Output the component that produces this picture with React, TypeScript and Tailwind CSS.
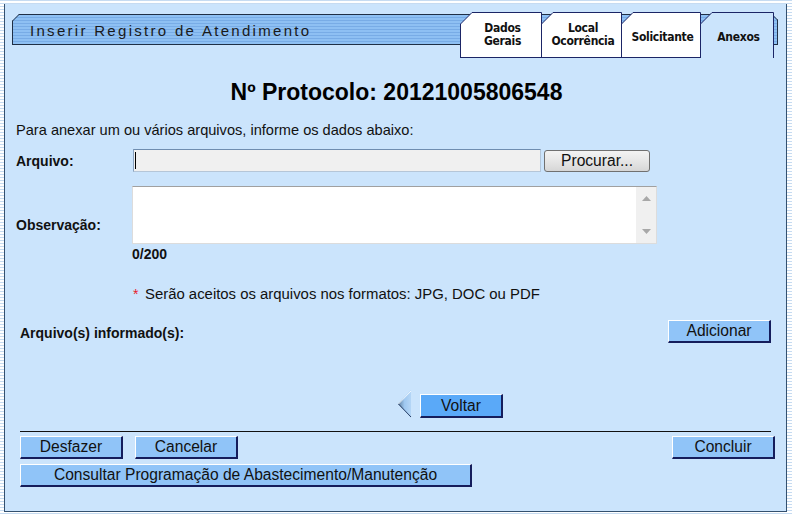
import React from "react";

const btn =
  "h-[23px] bg-[#90c4f8] border-t border-l border-r-2 border-b-2 border-t-white border-l-white border-r-[#151d5c] border-b-[#151d5c] text-[15.6px] leading-none text-[#111] flex items-center justify-center";

type TabProps = { w: number; lines: string[]; active?: boolean };

function Tab({ w, lines, active }: TabProps) {
  const h = 46;
  return (
    <div className="relative shrink-0 -ml-px first:ml-0" style={{ width: w, height: h }}>
      <svg className="absolute inset-0" width={w} height={h}>
        <polygon
          points={`0.5,${h} 0.5,12 12,0.5 ${w - 0.5},0.5 ${w - 0.5},${h}`}
          fill={active ? "#cbe4fc" : "#ffffff"}
          stroke="#1b2566"
          strokeWidth="1"
        />
        {active ? <rect x="1" y={h - 1} width={w - 2} height="1" fill="#cbe4fc" /> : <line x1="0" y1={h - 0.5} x2={w} y2={h - 0.5} stroke="#1b2566" />}
      </svg>
      <div className={"relative flex h-full flex-col items-center justify-center pl-[3px] text-[12px] leading-[13px] font-bold text-[#111] font-['DejaVu_Sans_Condensed','Liberation_Sans_Narrow','DejaVu_Sans',sans-serif] [font-stretch:condensed] tracking-[-0.3px] " + (lines.length === 1 ? "pt-[5px]" : "")}>
        {lines.map((l) => (
          <span key={l}>{l}</span>
        ))}
      </div>
    </div>
  );
}

export default function App() {
  return (
    <div className="w-[792px] h-[516px] overflow-hidden pt-[4px] pl-[4px] bg-[repeating-linear-gradient(180deg,#c6dbf1_0px,#c6dbf1_1px,#ffffff_1px,#ffffff_3px)] font-['Liberation_Sans',Arial,sans-serif] text-[#111]">
      <div className="w-[783px] h-[508px] bg-[#cbe4fc] border-l border-r border-b border-[#34506e] flex flex-col">
        {/* header */}
        <div className="relative h-[54px] shrink-0">
          <div className="relative mt-[10px] ml-[7px] w-[766px] h-[31px] border border-[#1f2f45] bg-[repeating-linear-gradient(180deg,#8ec0f3_0px,#8ec0f3_2px,#78ace6_2px,#78ace6_3px)] flex items-center pl-[17px] pt-[3px]">
            <svg className="absolute -left-px -top-px" width="8" height="8">
              <polygon points="0,0 7,0 0,7" fill="#cbe4fc" />
              <line x1="0.5" y1="7" x2="7" y2="0.5" stroke="#1f2f45" />
            </svg>
            <svg className="absolute -right-px -top-px" width="6" height="6">
              <polygon points="0,0 6,0 6,6" fill="#cbe4fc" />
              <line x1="0" y1="0.5" x2="5.5" y2="6" stroke="#1f2f45" />
            </svg>
            <span className="text-[15px] tracking-[2.3px] text-[#1a1a1a]">Inserir Registro de Atendimento</span>
          </div>
          <div className="absolute left-[455px] top-[8px] flex">
            <Tab w={82} lines={["Dados", "Gerais"]} />
            <Tab w={81} lines={["Local", "Ocorrência"]} />
            <Tab w={80} lines={["Solicitante"]} />
            <Tab w={74} lines={["Anexos"]} active />
          </div>
        </div>

        {/* protocolo */}
        <div className="mt-[21px] text-center text-[23px] leading-[26px] font-bold text-black pl-[2px]">
          Nº Protocolo: 20121005806548
        </div>

        <div className="mt-[17px] pl-[11px] text-[14.6px] leading-[16px]">
          Para anexar um ou vários arquivos, informe os dados abaixo:
        </div>

        {/* arquivo */}
        <div className="mt-[11px] pl-[11px] flex items-center">
          <div className="w-[117px] pt-[1px] text-[14px] leading-[16px] font-bold">Arquivo:</div>
          <div className="w-[408px] h-[23px] bg-[#f0f0f0] border border-[#b5c6d8] border-t-[#6f8db0] border-l-[#8aa3c0] flex items-center pl-[1px]">
            <div className="w-px h-[17px] bg-black" />
          </div>
          <div className="ml-[3px] w-[106px] h-[22px] rounded-[3px] border border-[#707070] bg-[linear-gradient(180deg,#f3f3f3,#e6e6e6_50%,#d6d6d6)] text-[15.6px] leading-none flex items-center justify-center">
            Procurar...
          </div>
        </div>

        {/* observacao */}
        <div className="mt-[14px] pl-[11px] flex items-center">
          <div className="w-[116px] mt-[20px] text-[14px] leading-[16px] font-bold">Observação:</div>
          <div className="w-[525px] h-[58px] bg-white border-t border-[#a0a0a0] border-x border-x-[#dcdcdc] border-b border-b-[#dcdcdc] flex">
            <div className="flex-1" />
            <div className="w-[20px] bg-[#f0f0f0] flex flex-col items-center justify-between py-[9px]">
              <svg width="9" height="5"><polygon points="0,5 4.5,0 9,5" fill="#a8a8a8" /></svg>
              <svg width="9" height="5"><polygon points="0,0 4.5,5 9,0" fill="#a8a8a8" /></svg>
            </div>
          </div>
        </div>
        <div className="mt-[2px] pl-[127px] text-[14px] leading-[16px] font-bold">0/200</div>

        <div className="mt-[24px] pl-[128px] flex items-center text-[14.9px] leading-[16px]">
          <span className="text-[#e8202a] w-[12px] text-[14px]">*</span>
          <span>Serão aceitos os arquivos nos formatos: JPG, DOC ou PDF</span>
        </div>

        {/* arquivos informados */}
        <div className="mt-[18px] pl-[15px] pr-[15px] flex items-center justify-between">
          <div className="pt-[3px] text-[14px] leading-[16px] font-bold">Arquivo(s) informado(s):</div>
          <div className={btn + " w-[103px]"}>Adicionar</div>
        </div>

        {/* voltar */}
        <div className="mt-[47px] ml-[393px] flex items-end">
          <svg width="14" height="28" className="shrink-0">
            <defs>
              <linearGradient id="arr" x1="0" x2="1" y1="0" y2="0">
                <stop offset="0" stopColor="#5f7f9f" />
                <stop offset="0.5" stopColor="#9fc8f0" />
                <stop offset="1" stopColor="#b5d6f6" />
              </linearGradient>
            </defs>
            <polygon points="0,14 13,0 13,28" fill="url(#arr)" />
            <line x1="0.5" y1="14" x2="13" y2="1" stroke="#ffffff" strokeWidth="0.8" />
            <line x1="0.5" y1="14" x2="13" y2="27" stroke="#2a3f66" strokeWidth="1" />
          </svg>
          <div className="ml-[8px] w-[83px] h-[24px] bg-[#5aa9f8] border-t border-l border-r-2 border-b-2 border-t-white border-l-white border-r-[#151d5c] border-b-[#151d5c] text-[15.6px] leading-none flex items-center justify-center">
            Voltar
          </div>
        </div>

        <div className="mt-[13px] ml-[15px] w-[751px] h-px bg-[#111]" />

        <div className="mt-[4px] pl-[15px] pr-[11px] flex items-center">
          <div className={btn + " w-[103px]"}>Desfazer</div>
          <div className={btn + " w-[103px] ml-[12px]"}>Cancelar</div>
          <div className="flex-1" />
          <div className={btn + " w-[103px]"}>Concluir</div>
        </div>
        <div className="mt-[5px] pl-[15px] flex">
          <div className={btn + " w-[452px]"}>Consultar Programação de Abastecimento/Manutenção</div>
        </div>
      </div>
    </div>
  );
}
